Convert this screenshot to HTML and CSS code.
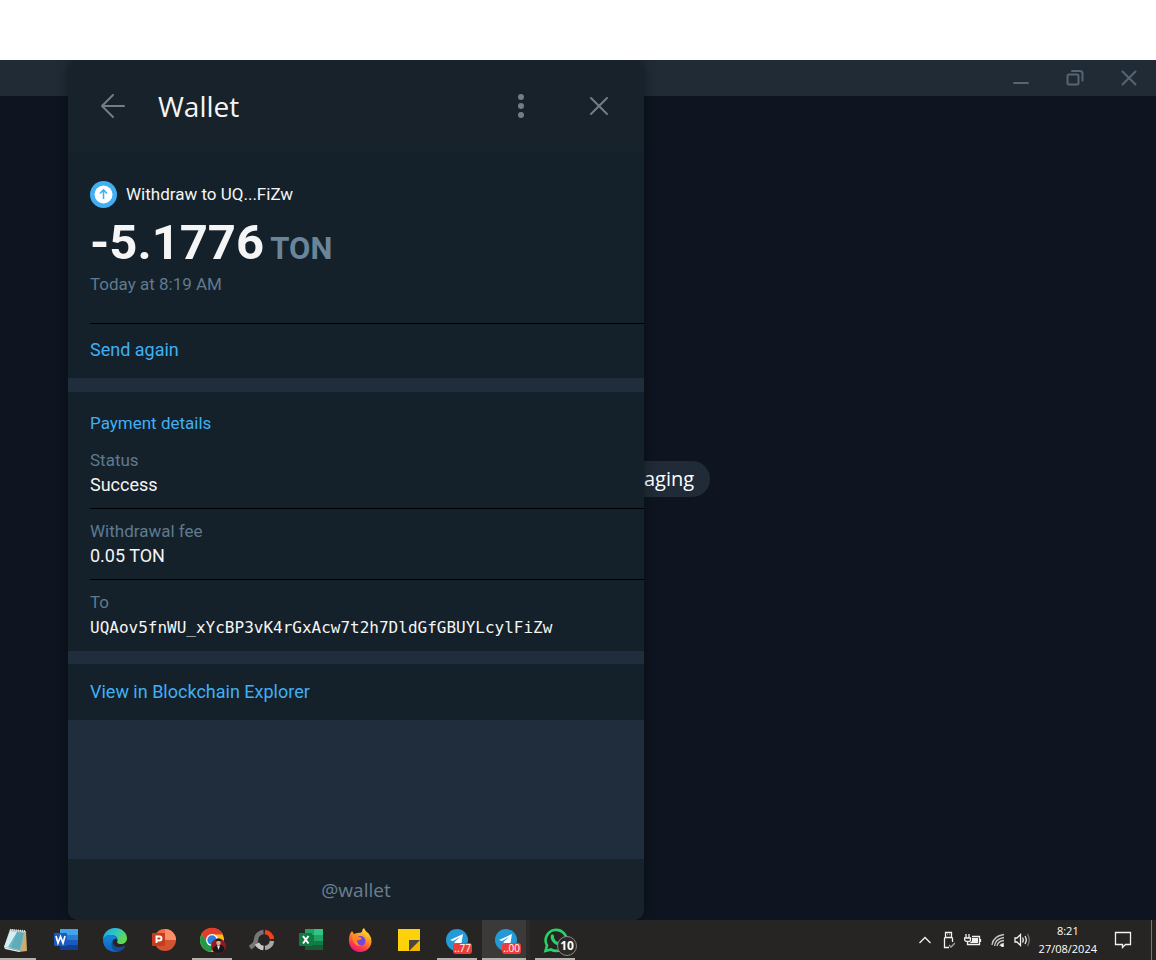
FILE: index.html
```html
<!DOCTYPE html>
<html lang="en">
<head>
<meta charset="utf-8">
<title>Wallet</title>
<link rel="stylesheet" href="styles.css">
</head>
<body>
<div class="screen">
  <main class="app">
    <div class="titlebar">
      <button class="win-btn" aria-label="Minimize"><svg width="18" height="18" viewBox="0 0 18 18"><path d="M2 14H16"/></svg></button>
      <button class="win-btn" aria-label="Restore"><svg width="18" height="18" viewBox="0 0 18 18"><rect x="1.500" y="5.500" width="11" height="10" rx="1.500"/><path d="M6 2H14Q16.500 2 16.500 4.500V11.500"/></svg></button>
      <button class="win-btn" aria-label="Close window"><svg width="18" height="18" viewBox="0 0 18 18"><path d="M2.500 2.500L15.500 15.500M15.500 2.500L2.500 15.500"/></svg></button>
    </div>

    <section class="panel">
      <header class="panel-head">
        <button class="head-btn" aria-label="Back"><svg width="26" height="26" viewBox="0 0 26 26"><path d="M24 13H2M13 2L2 13L13 24"/></svg></button>
        <h1 class="panel-title">Wallet</h1>
        <button class="head-btn" aria-label="More"><svg class="dots" width="26" height="26" viewBox="0 0 26 26"><circle cx="13" cy="4" r="3"/><circle cx="13" cy="13" r="3"/><circle cx="13" cy="22" r="3"/></svg></button>
        <button class="head-btn" aria-label="Close"><svg width="26" height="26" viewBox="0 0 26 26"><path d="M5 5L21 21M21 5L5 21"/></svg></button>
      </header>

      <div class="card summary">
        <div class="summary-body">
          <div class="summary-to">
            <svg width="27" height="27" viewBox="0 0 27 27" aria-hidden="true"><circle cx="13.500" cy="13.500" r="13.500" fill="#41aff3"/><circle cx="13.500" cy="13.500" r="9" fill="#fff"/><path d="M13.500 18V9.500M10 12.500L13.500 9L17 12.500" fill="none" stroke="#41aff3" stroke-width="1.600"/></svg>
            <span>Withdraw to UQ...FiZw</span>
          </div>
          <div class="amount">-5.1776 <span class="unit">TON</span></div>
          <div class="muted">Today at 8:19 AM</div>
        </div>
        <a class="row-link" href="#">Send again</a>
      </div>

      <div class="card details">
        <h2 class="details-title">Payment details</h2>
        <dl class="details-list">
          <div class="detail"><dt>Status</dt><dd>Success</dd></div>
          <div class="detail"><dt>Withdrawal fee</dt><dd>0.05 TON</dd></div>
          <div class="detail"><dt>To</dt><dd class="address">UQAov5fnWU_xYcBP3vK4rGxAcw7t2h7DldGfGBUYLcylFiZw</dd></div>
        </dl>
      </div>

      <div class="card"><a class="row-link" href="#">View in Blockchain Explorer</a></div>
      <footer class="panel-foot">@wallet</footer>
    </section>

    <div class="chat-area"><span class="pill">aging</span></div>
  </main>

  <footer class="taskbar">
    <nav class="tasks">
      <button class="task first open" aria-label="Notepad"><svg width="26" height="26" viewBox="0 0 26 26"><path d="M8 3L24 4L25 24L17 25z" fill="#c9ab73"/><path d="M8 2L23 4L18 24L2 20z" fill="#8cc5d0"/><path d="M8 4L15 5L9 21L2 20z" fill="#d5eef1"/><path d="M15 5L22 6L18 23L6 20z" fill="#4fa3b3" opacity=".75"/><path d="M2 20L18 24L17 25L3 22z" fill="#e8eeee"/><path d="M8 3L23 4" stroke="#ddd" stroke-width="2" stroke-dasharray="1 1"/></svg></button>
      <button class="task" aria-label="Word"><svg width="26" height="26" viewBox="0 0 26 26"><path d="M7 2H25V8H7z" fill="#41a5ee"/><path d="M7 8H25V13H7z" fill="#2b7cd3"/><path d="M7 13H25V18H7z" fill="#185abd"/><path d="M7 18H25V23H7z" fill="#103f91"/><rect x="1" y="6" width="13" height="13" rx="1" fill="#185abd"/><path d="M3 9L5 16L7.500 9.500L10 16L12 9" fill="none" stroke="#fff" stroke-width="1.700"/></svg></button>
      <button class="task" aria-label="Edge"><svg width="26" height="26" viewBox="0 0 26 26"><defs><linearGradient id="ea" x1="0" y1="0" x2="1" y2=".5"><stop offset="0" stop-color="#1da2e4"/><stop offset=".55" stop-color="#2fc8c5"/><stop offset="1" stop-color="#65d94e"/></linearGradient><linearGradient id="eb" x1="0" y1="0" x2="0" y2="1"><stop offset="0" stop-color="#1487dc"/><stop offset="1" stop-color="#0f62b5"/></linearGradient></defs><path d="M1 13C1 6 6 1 13 1C20 1 25 6 25 11C25 15 22 17 19 17C16 17 14.500 16 15.500 14C16 10 13 8 9 8C5 8 2 10 1 13z" fill="url(#ea)"/><path d="M1 13C2 9 5 8 9 8C12 8 15 10 15.500 12C12 11 10 13 10.500 16C11 20 16 22 23 19C21 23 17 25 13 25C6 25 1 20 1 13z" fill="url(#eb)"/><path d="M10.500 14C8 18 10 23 15 25C19 24 22 22 23 19C17 22 11 20 10.500 14z" fill="#124c9b"/></svg></button>
      <button class="task" aria-label="PowerPoint"><svg width="26" height="26" viewBox="0 0 26 26"><circle cx="14" cy="13" r="11" fill="#d35230"/><path d="M14 2A11 11 0 0 1 25 13H14z" fill="#ff8f6b"/><path d="M14 2A11 11 0 0 0 3 13H14z" fill="#ed6c47"/><rect x="1" y="6" width="13" height="13" rx="1" fill="#c43e1c"/><path d="M5.500 16V9.500H8.500Q10.500 9.500 10.500 11.500T8.500 13.500H6" fill="none" stroke="#fff" stroke-width="1.900"/></svg></button>
      <button class="task open" aria-label="Chrome"><svg width="28" height="28" viewBox="0 0 28 28"><circle cx="13" cy="14" r="12" fill="#fbc116"/><path d="M2.600 8A12 12 0 0 1 24 8.500H13L8.500 17z" fill="#e33b2e"/><path d="M2.600 8A12 12 0 0 0 12 26L17 17L8 16z" fill="#229a4b"/><circle cx="13" cy="14" r="6" fill="#fff"/><circle cx="13" cy="14" r="4.700" fill="#2a7de1"/><circle cx="19.500" cy="20" r="7.500" fill="#8e1b20"/><path d="M13.500 24Q14 20 19.500 19T25.500 24A7.500 7.500 0 0 1 13.500 24z" fill="#17191e"/><ellipse cx="19.500" cy="16.500" rx="2.200" ry="2.800" fill="#dba987"/><path d="M17 15.500Q17 12.500 19.500 12.500T22 15.500Q19.500 14 17 15.500z" fill="#111"/><path d="M18 19.500L19.500 24L21 19.500z" fill="#eee"/></svg></button>
      <button class="task" aria-label="Search tool"><svg width="26" height="26" viewBox="0 0 26 26" fill="none" stroke-width="4.500"><path d="M14.500 5A8 8 0 0 0 7 13Q7 17 1 20.500" stroke="#77777a"/><path d="M16 5A8 8 0 0 1 23 12" stroke="#f5421b"/><path d="M23 14A8 8 0 0 1 16 21" stroke="#a8a8a8"/><path d="M14.500 21A8 8 0 0 1 8 16.500" stroke="#c8c8c8"/></svg></button>
      <button class="task" aria-label="Excel"><svg width="26" height="26" viewBox="0 0 26 26"><path d="M7 2H25V23H7z" fill="#107c41"/><path d="M7 2H16V8H7z" fill="#21a366"/><path d="M16 2H25V8H16z" fill="#33c481"/><path d="M16 8H25V14H16z" fill="#21a366"/><path d="M7 18H25V23H7z" fill="#185c37"/><rect x="1" y="6" width="13" height="13" rx="1" fill="#107c41"/><path d="M5 9L10.500 16.500M10.500 9L5 16.500" stroke="#fff" stroke-width="2"/></svg></button>
      <button class="task" aria-label="Firefox"><svg width="26" height="26" viewBox="0 0 26 26"><defs><linearGradient id="fa" x1=".8" y1="0" x2=".3" y2="1"><stop offset="0" stop-color="#fff13d"/><stop offset=".4" stop-color="#ff9a24"/><stop offset=".75" stop-color="#ff3b47"/><stop offset="1" stop-color="#e31587"/></linearGradient></defs><path d="M2 11Q2 7 5 4L7 7L10 6Q14 6 15 5Q15 2 17 1Q18 4 21 6L22 7Q25 11 24.500 15C24 21 19 25 13 25C6 25 1 19 2 11z" fill="url(#fa)"/><circle cx="13.500" cy="14" r="5" fill="#7645dd"/><path d="M5 9Q9 7 12 10L15 11Q13 14 10 13Q10 18 15 19Q6 20 5 9z" fill="#ff8a20"/></svg></button>
      <button class="task" aria-label="Sticky Notes"><svg width="26" height="26" viewBox="0 0 26 26"><path d="M2 2H24V13H13V24H2z" fill="#fdd20a"/><path d="M13 13H24L13 24z" fill="#484644"/><path d="M24 13V24H13z" fill="#f0b900"/></svg></button>
      <button class="task open" aria-label="Telegram, 77 unread"><svg width="26" height="26" viewBox="0 0 26 26"><circle cx="12" cy="13" r="11" fill="#249bd7"/><path d="M5 13L18 7L16 19L12 16L10 18L9.500 15L15 10L8 14z" fill="#fff"/></svg><span class="badge">..77</span></button>
      <button class="task open active" aria-label="Telegram"><svg width="26" height="26" viewBox="0 0 26 26"><circle cx="12" cy="13" r="11" fill="#249bd7"/><path d="M5 13L18 7L16 19L12 16L10 18L9.500 15L15 10L8 14z" fill="#fff"/></svg><span class="badge">..00</span></button>
      <button class="task open" aria-label="WhatsApp, 10 unread"><svg width="26" height="26" viewBox="0 0 26 26"><path d="M2.500 24L4 18.500A10.500 10.500 0 1 1 8 22.500z" fill="none" stroke="#25d366" stroke-width="2.600"/><path d="M8 8Q10 6 11 9L11 11Q12 14 15 15L17 14Q20 16 17 18C13 20 6 13 8 8z" fill="#25d366"/></svg><span class="badge count">10</span></button>
    </nav>

    <div class="tray">
      <svg width="14" height="20" viewBox="0 0 14 20"><path d="M1.500 13L7 7.500L12.500 13"/></svg>
      <svg width="14" height="20" viewBox="0 0 14 20"><path d="M4.500 7V2.500H10.500V7M6.500 4.500H7M8.500 4.500H9M8 17.500H3.500V8.500Q3.500 7.500 4.500 7.500H10.500Q11.500 7.500 11.500 8.500V12"/><path d="M8 15L10 17L14 13" stroke="#a5a5a3"/></svg>
      <svg width="18" height="20" viewBox="0 0 18 20"><path d="M2 4V8M5 4V8M.5 8H6.500V10Q6.500 11.500 4 11.500Q.5 11.500 .5 9zM3.500 12V14.500H15.500V6.500H8M16.500 9V12"/><path d="M8 8H14V13H5.500L8 11z" fill="#f2f2f2" stroke="none"/></svg>
      <svg width="14" height="20" viewBox="0 0 14 20"><path d="M1 15Q2 6 13 4.500M3.500 16Q4 9 13 7.500M6 16Q7 11 13 10.500M9 16Q9.500 14 13 13.500" stroke="#c5c5c3"/><circle cx="11.500" cy="15.500" r="1.500" fill="#fff" stroke="none"/></svg>
      <svg width="16" height="20" viewBox="0 0 16 20"><path d="M1 8H3L6.500 4.500V15.500L3 12H1zM8.500 7.500Q10 10 8.500 12.500M11 6Q13.500 10 11 14"/><path d="M13.500 4Q17 10 13.500 16" stroke="#777"/></svg>
      <time class="clock"><span>8:21</span><span>27/08/2024</span></time>
      <button class="notify" aria-label="Notifications"><svg width="18" height="20" viewBox="0 0 18 20"><path d="M1.500 2.500H16.500V14.500H11.500L8.500 17.500V14.500H1.500z"/></svg></button>
    </div>
  </footer>
</div>
</body>
</html>
```
FILE: styles.css
```css
* { box-sizing: border-box; }

body {
  margin: 0;
  background: #fff;
  font-family: Roboto, "Liberation Sans", sans-serif;
}

button {
  padding: 0;
  border: 0;
  background: none;
  font: inherit;
}

svg { display: block; flex: none; }

.screen {
  display: flex;
  flex-direction: column;
  min-height: 100vh;
  padding-top: 60px;
}

.app {
  display: grid;
  flex: 1;
  grid-template-columns: 68px minmax(0, 576px) 1fr;
  grid-template-rows: 36px 1fr;
  overflow: hidden;
  background: #0e1520;
}

.titlebar {
  grid-area: 1 / 1 / 2 / 4;
  display: flex;
  justify-content: flex-end;
  background: #202b36;
}

.win-btn {
  display: grid;
  place-items: center;
  width: 54px;
}

.win-btn svg, .head-btn svg {
  fill: none;
  stroke: #566573;
  stroke-width: 2;
  stroke-linecap: round;
  stroke-linejoin: round;
}

.panel {
  grid-area: 1 / 2 / 3 / 3;
  z-index: 1;
  display: flex;
  flex-direction: column;
  gap: 13px;
  overflow: hidden;
  border-radius: 10px;
  background: #1f2d3c;
  box-shadow: 0 0 12px #0006;
}

.panel-head {
  display: flex;
  align-items: center;
  height: 92px;
  margin-bottom: -13px;
  padding: 0 19px;
  background: #18222b;
}

.head-btn {
  display: grid;
  place-items: center;
  width: 52px;
  height: 52px;
}

.head-btn + .head-btn { margin-left: 26px; }
.head-btn svg { stroke: #747d85; }
.head-btn .dots { fill: #747d85; stroke: none; }

.panel-title {
  flex: 1;
  margin: 0 0 0 19px;
  color: #f5f5f5;
  font: 500 28px/36px "Open Sans", sans-serif;
}

.card {
  background: #14212a;
  color: #f5f5f5;
}

.summary-body {
  height: 172px;
  margin-left: 22px;
  padding-top: 29px;
  border-bottom: 1px solid #000;
}

.summary-to {
  display: flex;
  align-items: center;
  gap: 9px;
  font-size: 17px;
  line-height: 27px;
}

.amount {
  padding-top: 10px;
  font-size: 49px;
  font-weight: 700;
  line-height: 50px;
}

.unit {
  margin-left: -6px;
  color: #6a8499;
  font-size: 31px;
}

.muted, .detail dt {
  color: #5f7a8f;
  font-size: 17px;
  line-height: 20px;
}

.row-link {
  display: block;
  padding: 15px 22px 16px;
  color: #41aff3;
  font-size: 18px;
  line-height: 25px;
  text-decoration: none;
}

.summary .row-link { padding-top: 13px; }

.details {
  margin-top: 1px;
  padding: 20px 0 0 22px;
}

.details-title {
  margin: 0;
  color: #41aff3;
  font-size: 17px;
  font-weight: 400;
  line-height: 22px;
}

.details-list { margin: 6px 0 0; }

.detail {
  height: 71px;
  padding-top: 12px;
  border-bottom: 1px solid #000;
}

.detail:first-child { height: 69px; padding-top: 10px; }
.detail:last-child { border: 0; }

.detail dd {
  margin: 4px 0 0;
  font-size: 18px;
  line-height: 22px;
}

.detail .address {
  font: 16px/24px "DejaVu Sans Mono", monospace;
}

.panel-foot {
  margin-top: auto;
  padding-top: 1px;
  background: #18222b;
  color: #6a7f92;
  font: 19px/60px "Open Sans", sans-serif;
  text-align: center;
}

.chat-area {
  grid-area: 2 / 3 / 3 / 4;
  display: flex;
  align-items: center;
  padding-bottom: 58px;
}

.pill {
  padding: 0 16px 0 0;
  border-radius: 0 18px 18px 0;
  background: #202b37;
  color: #fff;
  font: 20px/36px "Open Sans", sans-serif;
}

.taskbar {
  display: flex;
  justify-content: space-between;
  height: 40px;
  background: #272523;
}

.tasks { display: flex; }

.task {
  position: relative;
  display: grid;
  place-items: center;
  width: 49px;
}

.task.first { width: 41px; padding-right: 11px; }

.task.open::after {
  content: "";
  position: absolute;
  bottom: 0;
  left: 4px;
  width: 40px;
  height: 2px;
  background: #b5b1ad;
}

.task.first::after { left: 0; width: 36px; }

.task.active::after { left: 0; width: 44px; }

.task.active {
  background: linear-gradient(90deg, #3c3a38 44px, #2d2b29 44px 48px, #0000 48px);
}

.badge {
  position: absolute;
  right: 10px;
  bottom: 6px;
  padding: 0 1px;
  border-radius: 3px;
  background: #ee3c38;
  color: #fff;
  font: 10px/11px "Open Sans", sans-serif;
}

.badge.count {
  right: 3px;
  bottom: 4px;
  width: 20px;
  height: 20px;
  padding: 0;
  border: 1px solid #8b8985;
  border-radius: 50%;
  background: #2b2a28;
  font: 700 12px/18px "Open Sans", sans-serif;
  text-align: center;
}

.tray {
  display: flex;
  align-items: center;
  gap: 9px;
  padding-right: 4px;
  background: linear-gradient(#777, #777) right 4px top / 1px 100% no-repeat;
}

.tray svg {
  fill: none;
  stroke: #f2f2f2;
  stroke-width: 1.3;
}

.clock {
  display: grid;
  color: #fff;
  font: 11px/18px "Open Sans", sans-serif;
  text-align: center;
}

.notify {
  margin: 0 20px 0 8px;
}
```
